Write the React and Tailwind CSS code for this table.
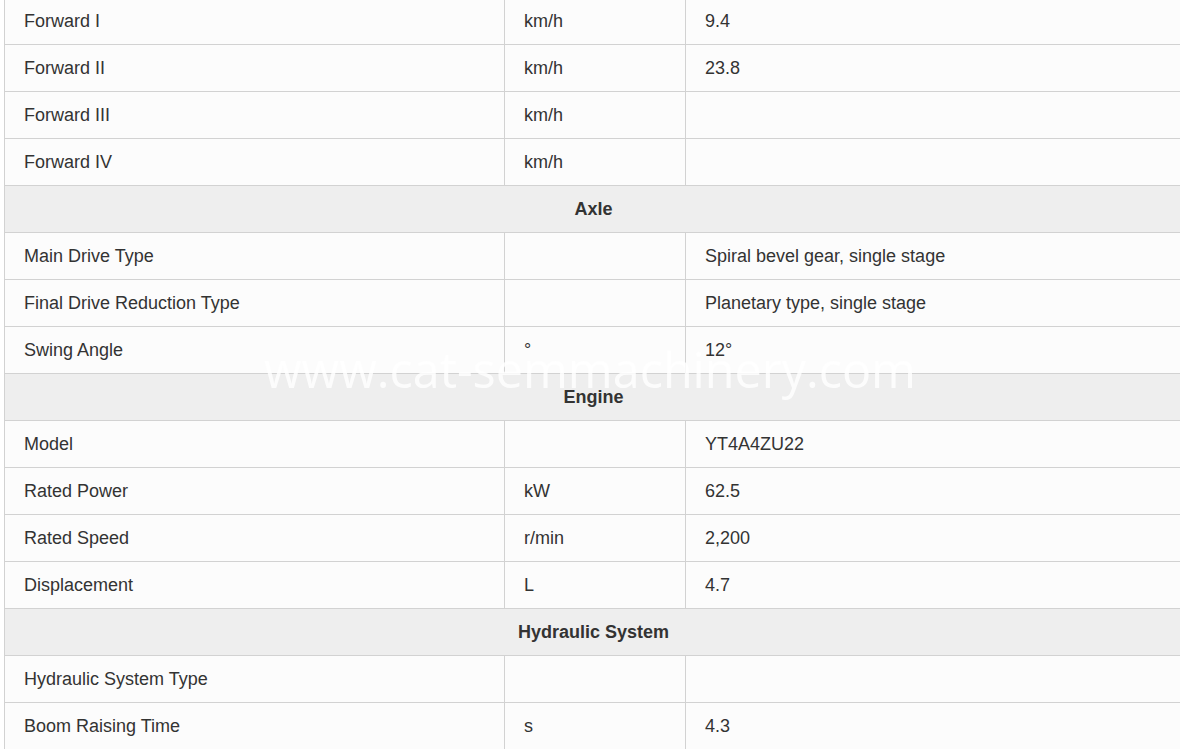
const rows = [
  { type: "row", name: "Forward I", unit: "km/h", value: "9.4" },
  { type: "row", name: "Forward II", unit: "km/h", value: "23.8" },
  { type: "row", name: "Forward III", unit: "km/h", value: "" },
  { type: "row", name: "Forward IV", unit: "km/h", value: "" },
  { type: "head", name: "Axle" },
  { type: "row", name: "Main Drive Type", unit: "", value: "Spiral bevel gear, single stage" },
  { type: "row", name: "Final Drive Reduction Type", unit: "", value: "Planetary type, single stage" },
  { type: "row", name: "Swing Angle", unit: "°", value: "12°" },
  { type: "head", name: "Engine" },
  { type: "row", name: "Model", unit: "", value: "YT4A4ZU22" },
  { type: "row", name: "Rated Power", unit: "kW", value: "62.5" },
  { type: "row", name: "Rated Speed", unit: "r/min", value: "2,200" },
  { type: "row", name: "Displacement", unit: "L", value: "4.7" },
  { type: "head", name: "Hydraulic System" },
  { type: "row", name: "Hydraulic System Type", unit: "", value: "" },
  { type: "row", name: "Boom Raising Time", unit: "s", value: "4.3" },
];

export default function App() {
  return (
    <div className="relative h-[749px] w-[1180px] overflow-hidden bg-white pl-[4px] font-['Liberation_Sans',Arial,sans-serif] text-[18px] text-[#333333]">
      <table className="-mt-[3px] w-[1179px] table-fixed border-collapse">
        <colgroup>
          <col className="w-[500px]" />
          <col className="w-[181px]" />
          <col />
        </colgroup>
        <tbody>
          {rows.map((r, i) =>
            r.type === "head" ? (
              <tr key={i} className="h-[47px] bg-[#eeeeee]">
                <td colSpan={3} className="border border-[#d2d2d2] px-5 text-center font-bold">
                  {r.name}
                </td>
              </tr>
            ) : (
              <tr key={i} className="h-[47px] bg-[#fcfcfc]">
                <td className="border border-[#d2d2d2] pl-[19px] pr-5">{r.name}</td>
                <td className="border border-[#d2d2d2] pl-[19px] pr-5">{r.unit}</td>
                <td className="border border-[#d2d2d2] pl-[19px] pr-5">{r.value}</td>
              </tr>
            )
          )}
        </tbody>
      </table>
      <div className="pointer-events-none absolute left-0 top-[341px] w-[1180px] text-center font-['Open_Sans',sans-serif] text-[48.5px] font-normal leading-[56px] text-white/85">
        www.cat-semmachinery.com
      </div>
    </div>
  );
}
